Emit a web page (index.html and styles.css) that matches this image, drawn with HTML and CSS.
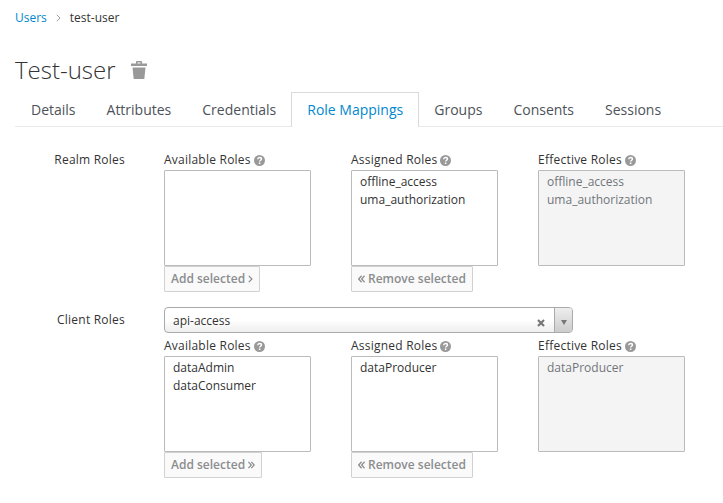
FILE: index.html
```html
<!DOCTYPE html>
<html lang="en">
<head>
<meta charset="utf-8">
<title>Role Mappings</title>
<link rel="stylesheet" href="styles.css">
</head>
<body>
<svg class="defs" width="0" height="0">
  <symbol id="help" viewBox="0 0 10 10">
    <circle cx="5" cy="5" r="5" fill="#999"/>
    <path d="M3.3 3.9C3.4 2.7 4.1 2.2 5.1 2.2S6.8 2.8 6.8 3.7C6.8 4.8 5.1 4.8 5.1 6" fill="none" stroke="#fff" stroke-width="1.3"/>
    <rect x="4.4" y="6.8" width="1.4" height="1.4" fill="#fff"/>
  </symbol>
</svg>
<nav class="breadcrumb">
  <a class="crumb-link">Users</a>
  <svg class="crumb-sep" width="5" height="8" viewBox="0 0 5 8"><path d="M.8.8 4 4 .8 7.2" fill="none" stroke="#999"/></svg>
  <span class="crumb-current">test-user</span>
</nav>
<header class="heading">
  <h1 class="title">Test-user</h1>
  <svg class="trash" width="16" height="18" viewBox="0 0 16 18"><path fill="#999" fill-rule="evenodd" d="M5 2.5V.8Q5 0 5.8 0h4.4Q11 0 11 .8v1.7h5V5H0V2.5zM6.5 1.5v1h3v-1zM1.5 6.5h13L13.3 18H2.7z"/></svg>
</header>
<ul class="tabs">
  <li class="tab">Details</li>
  <li class="tab">Attributes</li>
  <li class="tab">Credentials</li>
  <li class="tab active">Role Mappings</li>
  <li class="tab">Groups</li>
  <li class="tab">Consents</li>
  <li class="tab">Sessions</li>
</ul>
<main class="form">
  <section class="row realm">
    <div class="row-label">Realm Roles</div>
    <div class="columns">
      <div class="col">
        <div class="label">Available Roles <svg class="help"><use href="#help"/></svg></div>
        <div class="list"></div>
        <div class="btn add">Add selected <svg width="5" height="8" viewBox="0 0 5 8"><path d="M.8 .8 4 4l-3.2 3.2"/></svg></div>
      </div>
      <div class="col">
        <div class="label">Assigned Roles <svg class="help"><use href="#help"/></svg></div>
        <div class="list"><div>offline_access</div><div>uma_authorization</div></div>
        <div class="btn remove"><svg width="7" height="8" viewBox="0 0 7 8"><path d="M3.6.8.7 4l2.9 3.2M6.6.8 3.7 4l2.9 3.2"/></svg> Remove selected</div>
      </div>
      <div class="col">
        <div class="label">Effective Roles <svg class="help"><use href="#help"/></svg></div>
        <div class="list disabled"><div>offline_access</div><div>uma_authorization</div></div>
      </div>
    </div>
  </section>
  <section class="row client">
    <div class="row-label">Client Roles</div>
    <div class="client-body">
      <div class="select">
        <span class="select-value">api-access</span>
        <svg class="clear" width="8" height="8" viewBox="0 0 8 8"><path d="m1 1 6 6M7 1 1 7" stroke="#777" stroke-width="2.2"/></svg>
        <span class="arrow"><svg width="6" height="5" viewBox="0 0 6 5"><path d="M0 0h6L3 5z" fill="#777"/></svg></span>
      </div>
      <div class="columns">
        <div class="col">
          <div class="label">Available Roles <svg class="help"><use href="#help"/></svg></div>
          <div class="list"><div>dataAdmin</div><div>dataConsumer</div></div>
          <div class="btn add-client">Add selected <svg width="7" height="8" viewBox="0 0 7 8"><path d="M.4.8 3.3 4 .4 7.2M3.4.8 6.3 4 3.4 7.2"/></svg></div>
        </div>
        <div class="col">
          <div class="label">Assigned Roles <svg class="help"><use href="#help"/></svg></div>
          <div class="list"><div>dataProducer</div></div>
          <div class="btn remove"><svg width="7" height="8" viewBox="0 0 7 8"><path d="M3.6.8.7 4l2.9 3.2M6.6.8 3.7 4l2.9 3.2"/></svg> Remove selected</div>
        </div>
        <div class="col">
          <div class="label">Effective Roles <svg class="help"><use href="#help"/></svg></div>
          <div class="list disabled"><div>dataProducer</div></div>
        </div>
      </div>
    </div>
  </section>
</main>
</body>
</html>
```
FILE: styles.css
```css
* { box-sizing: border-box; }
body {
  margin: 0;
  height: 503px;
  overflow: hidden;
  background: #fff;
  color: #333;
  font: 12px/18px "Open Sans", sans-serif;
  white-space: nowrap;
}
.defs { display: block; }
.breadcrumb {
  display: flex;
  align-items: center;
  height: 18px;
  margin: 9px 0 0 15px;
}
.crumb-link { color: #0088ce; }
.crumb-sep { margin: 0 9px; }
.heading {
  display: flex;
  align-items: center;
  height: 34px;
  margin: 26px 0 0 15px;
}
.title {
  margin: 0 15px 0 0;
  font-size: 24px;
  line-height: 34px;
  font-weight: 300;
}
.tabs {
  display: flex;
  height: 35px;
  margin: 5px 0 0 15px;
  padding: 0;
  list-style: none;
  border-bottom: 1px solid #e9e9e9;
  font-size: 14px;
  color: #4d5258;
}
.tab {
  height: 35px;
  padding: 0 14px 0 16px;
  line-height: 35px;
  border-right: 1px solid transparent;
}
.active {
  background: #fff;
  color: #0088ce;
  line-height: 33px;
  padding: 0 15px;
  border: 1px solid #d9d9d9;
  border-bottom: 0;
}
.active ~ .tab { padding: 0 15px; }
.row { display: flex; }
.realm { margin-top: 24px; }
.client { margin-top: 15px; }
.row-label {
  width: 125px;
  margin-right: 39px;
  text-align: right;
  font-weight: 500;
  letter-spacing: .23px;
}
.client .row-label { padding-top: 4px; }
.columns { display: flex; gap: 40px; }
.col { width: 147px; }
.label {
  display: flex;
  align-items: flex-start;
  gap: 3px;
  height: 19px;
  font-weight: 500;
  letter-spacing: .23px;
}
.help { width: 11px; height: 11px; margin-top: 4px; }
.list {
  height: 96px;
  padding: 2px 8px;
  border: 1px solid #bbb;
  border-radius: 1px;
}
.disabled { background: #f4f4f4; color: #72767b; }
.btn {
  display: flex;
  align-items: center;
  gap: 3px;
  height: 26px;
  padding: 0 6px;
  border: 1px solid #d1d1d1;
  border-radius: 1px;
  background: #fafafa;
  color: #8b8d8f;
  font-weight: 600;
}
.btn path { fill: none; stroke: #8b8d8f; stroke-width: 1.3; }
.add { width: 96px; }
.add-client { width: 98px; }
.remove { width: 122px; }
.select {
  display: flex;
  align-items: center;
  width: 409px;
  height: 26px;
  margin-bottom: 4px;
  border: 1px solid #aaa;
  border-radius: 4px;
  background: linear-gradient(#fff 50%, #eee);
  overflow: hidden;
}
.select-value { margin: 2px auto 0 8px; }
.clear { margin: 6px 9px 0 0; }
.arrow {
  display: flex;
  align-items: center;
  justify-content: center;
  width: 18px;
  height: 24px;
  padding-top: 5px;
  border-left: 1px solid #aaa;
  background: linear-gradient(#eee, #ccc);
}
```
